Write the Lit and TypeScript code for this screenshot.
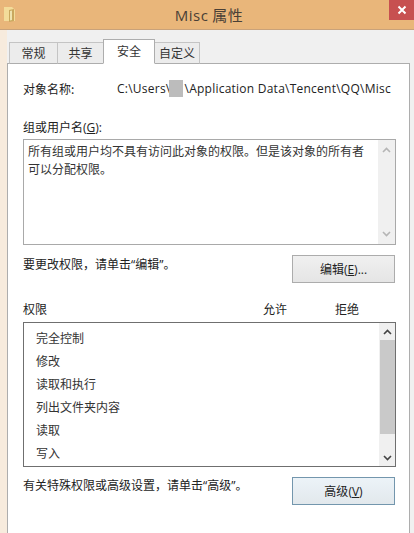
import { LitElement, html, css } from "lit";
import { customElement } from "lit/decorators.js";

const chevron = (up: boolean, color: string) => html`<svg class="chev" width="9" height="6" viewBox="0 0 9 6"><path d=${up ? "M1 5 L4.5 1.5 L8 5" : "M1 1 L4.5 4.5 L8 1"} fill="none" stroke=${color} stroke-width="1.6"/></svg>`;

@customElement("app-root")
export class AppRoot extends LitElement {
  static styles = css`
    :host { display: block; width: 414px; height: 533px; overflow: hidden; font-family: "Noto Sans CJK SC", "Noto Sans", sans-serif; font-size: 12px; color: #222; background: #f0f0f0; }
    .title { height: 29px; background: #e9b67a; border-bottom: 1px solid #c9a27a; display: flex; align-items: center; position: relative; box-sizing: content-box; }
    .folder { position: absolute; left: 3px; top: 6px; }
    .title-text { width: 100%; text-align: center; font-size: 15px; color: #4a4036; letter-spacing: 0.5px; line-height: 29px; padding-left: 4px; }
    .misc { font-family: "Open Sans", sans-serif; }
    .close { position: absolute; right: 0; top: 0; width: 25px; height: 20px; background: #c75050; display: flex; align-items: center; justify-content: center; }
    .frame { display: flex; height: 503px; }
    .edge-l { width: 7px; background: #f7ebdd; }
    .body { flex: 1; background: #f0f0f0; padding-top: 10px; display: flex; flex-direction: column; }
    .edge-r { width: 4px; background: #f0f0f0; }
    .tabs { display: flex; height: 24px; padding-left: 2px; align-items: flex-end; position: relative; z-index: 1; }
    .tab { box-sizing: border-box; height: 22px; border: 1px solid #c4c4c4; border-bottom: 1px solid #adadad; margin-right: -1px; background: #ececec; text-align: center; line-height: 20px; color: #333; }
    .tab.w1 { width: 49px; }
    .tab.w2 { width: 47px; }
    .tab.w4 { width: 46px; }
    .tab.active { width: 52px; height: 25px; background: #fff; border-color: #adadad; border-bottom: 1px solid #fff; line-height: 22px; position: relative; z-index: 2; }
    .panel { flex: 1; background: #fff; border: 1px solid #adadad; border-bottom: none; margin-top: -1px; padding: 0 13px 0 15px; position: relative; }
    .row-path { display: flex; margin-top: 15px; height: 20px; line-height: 20px; }
    .row-path .lbl { width: 94px; }
    .path { font-family: "Open Sans", "Noto Sans", sans-serif; font-size: 12px; white-space: nowrap; position: relative; letter-spacing: 0.24px; }
    .mask { display: inline-block; width: 14px; height: 17px; margin: 0 2px 0 -2px; background: #bcbcbc; vertical-align: -4px; }
    .group-lbl { margin-top: 19px; height: 18px; line-height: 18px; }
    .latin { font-family: "Open Sans", "Noto Sans CJK SC", sans-serif; }
    u { text-underline-offset: 1px; }
    .box { box-sizing: border-box; width: 373px; border: 1px solid #a9a9a9; display: flex; }
    .box.users { height: 106px; margin-top: 3px; }
    .msg { flex: 1; padding: 2px 4px; line-height: 18px; color: #333; }
    .sb { width: 17px; background: #f0f0f0; display: flex; flex-direction: column; align-items: center; justify-content: space-between; padding: 7px 0; box-sizing: border-box; }
    .row-edit { display: flex; justify-content: space-between; align-items: flex-start; width: 372px; margin-top: 10px; height: 29px; }
    .hint { line-height: 18px; }
    .btn { box-sizing: border-box; width: 103px; height: 28px; border: 1px solid #acacac; background: linear-gradient(#f0f0f0, #e5e5e5); text-align: center; line-height: 26px; color: #222; }
    .btn.def { border-color: #7396ad; background: linear-gradient(#ecf3f8, #e2e8ec); }
    .perm-head { display: flex; margin-top: 16px; height: 18px; line-height: 18px; }
    .perm-col { text-align: center; width: 24px; }
    .perm-name { width: 240px; }
    .perm-gap { width: 48px; }
    .box.perms { height: 145px; margin-top: 4px; border-color: #6f6f6f; }
    .list { flex: 1; padding: 3px 0 0 12px; display: flex; flex-direction: column; }
    .item { height: 23px; line-height: 23px; color: #333; }
    .sb2 { width: 16px; background: #f0f0f0; display: flex; flex-direction: column; align-items: center; position: relative; }
    .sb2 .end { height: 17px; display: flex; align-items: center; justify-content: center; width: 100%; }
    .thumb { width: 15px; flex: 1; background: #c9c9c9; margin-bottom: 15px; }
    .row-adv { display: flex; justify-content: space-between; align-items: flex-start; width: 372px; margin-top: 10px; }
    .row-adv .hint { margin-top: -1px; }
  `;

  render() {
    const items = ["完全控制", "修改", "读取和执行", "列出文件夹内容", "读取", "写入"];
    return html`
      <div class="title">
        <svg class="folder" width="14" height="17" viewBox="0 0 14 17"><path d="M1 1 L9 1 L12 4 L12 15 L1 15 Z" fill="#f3dc9a"/><path d="M6 4 L11 3 L11 15 L6 16 Z" fill="#c9a85e"/><path d="M7 5 L9 4.5 L9 14 L7 14.5 Z" fill="#efe3b0"/></svg>
        <div class="title-text"><span class="misc">Misc</span> 属性</div>
        <div class="close"><svg width="10" height="10" viewBox="0 0 10 10"><path d="M1.5 1.5 L8.5 8.5 M8.5 1.5 L1.5 8.5" stroke="#fff" stroke-width="2"/></svg></div>
      </div>
      <div class="frame">
        <div class="edge-l"></div>
        <div class="body">
          <div class="tabs">
            <div class="tab w1">常规</div>
            <div class="tab w2">共享</div>
            <div class="tab active">安全</div>
            <div class="tab w4">自定义</div>
          </div>
          <div class="panel">
            <div class="row-path">
              <div class="lbl">对象名称:</div>
              <div class="path">C:\\Users\\<span class="mask"></span>\\Application Data\\Tencent\\QQ\\Misc</div>
            </div>
            <div class="group-lbl">组或用户名<span class="latin">(<u>G</u>):</span></div>
            <div class="box users">
              <div class="msg">所有组或用户均不具有访问此对象的权限。但是该对象的所有者可以分配权限。</div>
              <div class="sb">${chevron(true, "#b5b5b5")}${chevron(false, "#b5b5b5")}</div>
            </div>
            <div class="row-edit">
              <div class="hint">要更改权限，请单击<span class="latin">“</span>编辑<span class="latin">”</span>。</div>
              <div class="btn">编辑<span class="latin">(<u>E</u>)...</span></div>
            </div>
            <div class="perm-head"><span class="perm-name">权限</span><span class="perm-col">允许</span><span class="perm-gap"></span><span class="perm-col">拒绝</span></div>
            <div class="box perms">
              <div class="list">${items.map((i) => html`<div class="item">${i}</div>`)}</div>
              <div class="sb2">
                <div class="end">${chevron(true, "#444")}</div>
                <div class="thumb"></div>
                <div class="end">${chevron(false, "#444")}</div>
              </div>
            </div>
            <div class="row-adv">
              <div class="hint">有关特殊权限或高级设置，请单击<span class="latin">“</span>高级<span class="latin">”</span>。</div>
              <div class="btn def">高级<span class="latin">(<u>V</u>)</span></div>
            </div>
          </div>
        </div>
        <div class="edge-r"></div>
      </div>
    `;
  }
}
